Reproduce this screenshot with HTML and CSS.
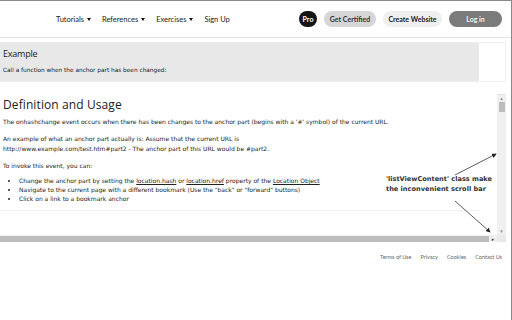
FILE: index.html
```html
<!DOCTYPE html>
<html lang="en">
<head>
    <meta charset="UTF-8">
    <title>onhashchange Event</title>
    <link rel="stylesheet" href="styles.css">
</head>
<body>
<div class="page">

    <header class="topnav">
        <nav class="topnav__menu">
            <a href="#" class="topnav__link">Tutorials <span class="caret"></span></a>
            <a href="#" class="topnav__link">References <span class="caret"></span></a>
            <a href="#" class="topnav__link">Exercises <span class="caret"></span></a>
            <a href="#" class="topnav__link">Sign Up</a>
        </nav>
        <div class="topnav__actions">
            <a href="#" class="pill pill--pro">Pro</a>
            <a href="#" class="pill pill--cert">Get Certified</a>
            <a href="#" class="pill pill--site">Create Website</a>
            <a href="#" class="pill pill--login">Log in</a>
        </div>
    </header>

    <main class="panel">

        <div class="example-row">
            <div class="example">
                <h2 class="example__title">Example</h2>
                <p class="example__text">Call a function when the anchor part has been changed:</p>
            </div>
        </div>

        <div class="viewer">
            <div class="viewer__body">
                <div class="viewer__content">
                    <h1 class="viewer__title">Definition and Usage</h1>
                    <p>The onhashchange event occurs when there has been changes to the anchor part (begins with a '#' symbol) of the current URL.</p>
                    <p>An example of what an anchor part actually is: Assume that the current URL is<br>
                        http://www.example.com/test.htm#part2 - The anchor part of this URL would be #part2.</p>
                    <p>To invoke this event, you can:</p>
                    <ul class="viewer__list">
                        <li>Change the anchor part by setting the <a href="#">location.hash</a> or <a href="#">location.href</a> property of the <a href="#">Location Object</a></li>
                        <li>Navigate to the current page with a different bookmark (Use the "back" or "forward" buttons)</li>
                        <li>Click on a link to a bookmark anchor</li>
                    </ul>
                </div>
                <div class="vscroll">
                    <span class="vscroll__up">&#9652;</span>
                    <span class="vscroll__thumb"></span>
                    <span class="vscroll__track"></span>
                    <span class="vscroll__down">&#9662;</span>
                </div>
            </div>
            <div class="hscroll">
                <span class="hscroll__thumb"></span>
                <span class="hscroll__right">&#9656;</span>
                <span class="hscroll__corner"></span>
            </div>

            <!-- annotation over the screenshot -->
            <p class="note">'listViewContent' class make<br>the inconvenient scroll bar</p>
            <svg class="arrows" width="512" height="160" viewBox="0 0 512 160">
                <defs>
                    <marker id="head" markerWidth="6" markerHeight="6" refX="5" refY="3" orient="auto">
                        <path d="M0,0 L6,3 L0,6 z" fill="#222"/>
                    </marker>
                </defs>
                <line x1="455" y1="81" x2="496" y2="60" stroke="#333" stroke-width="0.8" marker-end="url(#head)"/>
                <line x1="455" y1="107" x2="490" y2="138" stroke="#333" stroke-width="0.8" marker-end="url(#head)"/>
            </svg>
        </div>

    </main>

    <footer class="footer">
        <a href="#">Terms of Use</a>
        <a href="#">Privacy</a>
        <a href="#">Cookies</a>
        <a href="#">Contact Us</a>
    </footer>

</div>
</body>
</html>
```

FILE: styles.css
```css
html, body {
    margin: 0;
    padding: 0;
}

body {
    background: #fff;
    font-family: "DejaVu Sans", sans-serif;
    color: #222;
}

a {
    color: inherit;
    text-decoration: none;
}

.page {
    width: 512px;
    height: 320px;
    box-sizing: border-box;
    border-top: 1px solid #8a8a8a;
    border-right: 1px solid #8a8a8a;
    overflow: hidden;
}

/* top navigation */

.topnav {
    display: flex;
    align-items: center;
    height: 36px;
    padding: 0 9px 0 56px;
    border-bottom: 1px solid #e2e2e2;
    font-family: Lato, sans-serif;
}
.topnav__menu {
    display: flex;
    gap: 11px;
    font-size: 7.5px;
    color: #222;
}
.caret {
    display: inline-block;
    width: 0;
    height: 0;
    margin-left: 1px;
    vertical-align: middle;
    border-left: 2.5px solid transparent;
    border-right: 2.5px solid transparent;
    border-top: 3px solid #111;
}
.topnav__actions {
    display: flex;
    gap: 7px;
    margin-left: auto;
}
.pill {
    display: flex;
    align-items: center;
    justify-content: center;
    height: 16px;
    border-radius: 8px;
    font-size: 7px;
    font-weight: bold;
}
.pill--pro {
    width: 18px;
    background: #151515;
    color: #fff;
}
.pill--cert {
    width: 52px;
    background: #d6d6d6;
    color: #333;
}
.pill--site {
    width: 59px;
    background: #efefef;
    color: #222;
}
.pill--login {
    width: 53px;
    background: #7b7b7b;
    color: #f2f2f2;
}

/* content panel */

.panel {
    width: 506px;
    padding-top: 4px;
}

.example-row {
    display: flex;
    border: 1px solid #efefef;
    border-left: none;
}
.example {
    width: 479px;
    height: 38px;
    padding: 4px 3px 0;
    box-sizing: border-box;
    background: #e8e8e8;
}
.example__title {
    margin: 0;
    font-family: "Open Sans", sans-serif;
    font-weight: normal;
    font-size: 9px;
    letter-spacing: -0.2px;
    line-height: 14px;
    color: #222;
}
.example__text {
    margin: 5px 0 0;
    font-size: 5.8px;
    line-height: 8px;
}

.viewer {
    position: relative;
    margin-top: 12px;
}
.viewer__body {
    display: flex;
    height: 141px;
}
.viewer__content {
    flex: 1;
    overflow: hidden;
    white-space: nowrap;
    font-size: 6px;
    line-height: 10px;
}
.viewer__content p {
    margin: 0 0 7px 3px;
}
.viewer__title {
    margin: 0 0 1px 3px;
    font-family: "Open Sans", sans-serif;
    font-weight: normal;
    font-size: 12px;
    letter-spacing: 0.1px;
    line-height: 22px;
}
.viewer__list {
    margin: -2px 0 0;
    padding: 0 0 7px 19px;
    width: 461px;
    line-height: 9px;
    border-bottom: 1px solid #f1f1f1;
}
.viewer__list a {
    text-decoration: underline;
}

.vscroll {
    display: flex;
    flex-direction: column;
    align-items: center;
    width: 9px;
    background: #f0f0f0;
    border-top: 1px solid #e4e4e4;
    font-size: 5px;
    color: #888;
}
.vscroll__up,
.vscroll__down {
    height: 7px;
    line-height: 7px;
}
.vscroll__thumb {
    width: 6px;
    height: 10px;
    background: #bdbdbd;
}
.vscroll__track {
    flex: 1;
}

.hscroll {
    display: flex;
    align-items: center;
    height: 7px;
    background: #f0f0f0;
    font-size: 5px;
    color: #444;
}
.hscroll__thumb {
    flex: 1;
    height: 6px;
    background: #bdbdbd;
}
.hscroll__right {
    width: 8px;
    text-align: center;
}
.hscroll__corner {
    width: 9px;
    height: 7px;
    background: #e9e9e9;
}

.note {
    position: absolute;
    left: 386px;
    top: 80px;
    margin: 0;
    font-size: 6.6px;
    font-weight: bold;
    line-height: 10px;
    color: #333;
}
.arrows {
    position: absolute;
    left: 0;
    top: 0;
    pointer-events: none;
}

/* footer */

.footer {
    display: flex;
    justify-content: flex-end;
    gap: 9px;
    padding: 12px 9px 0 0;
    font-family: Lato, sans-serif;
    font-size: 5.5px;
    color: #666;
}
```
